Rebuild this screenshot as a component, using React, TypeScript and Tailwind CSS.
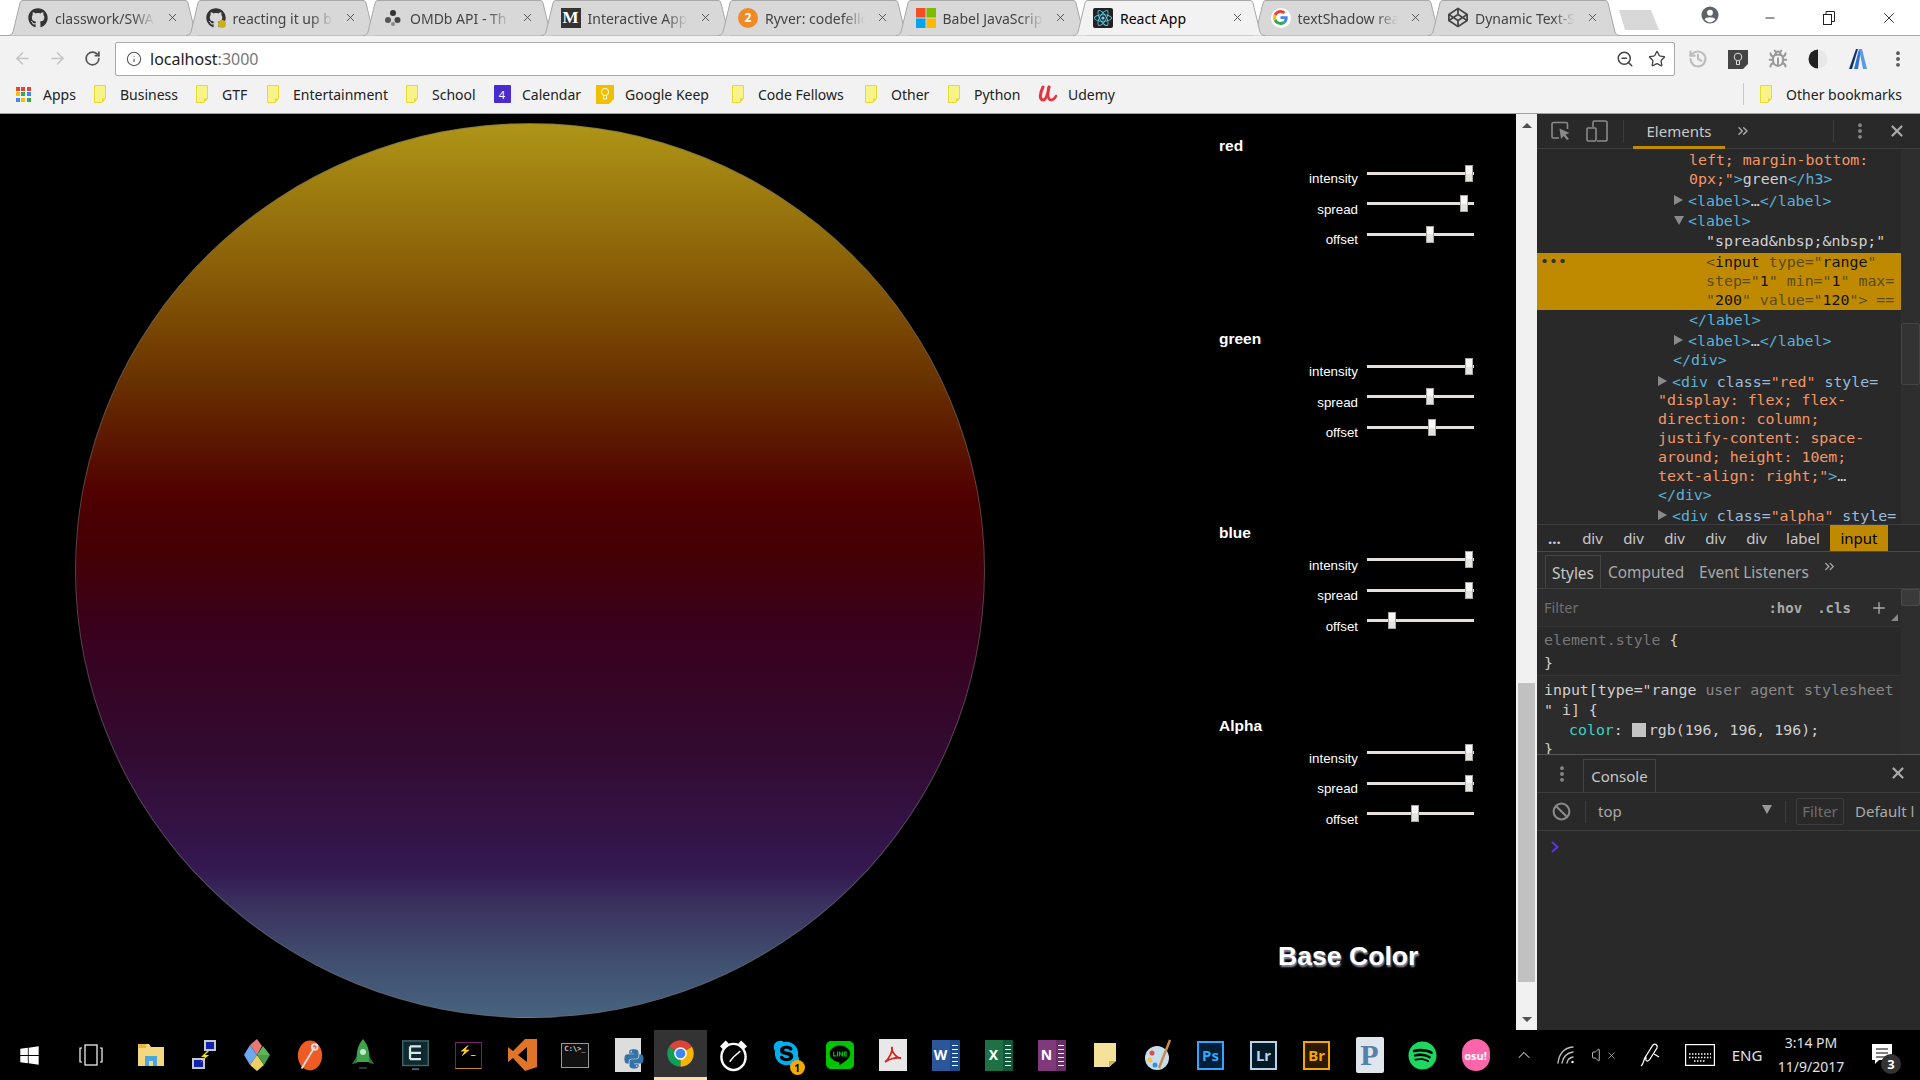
import React from 'react';
import {
  ArrowLeft,
  ArrowRight,
  RotateCw,
  Info,
  ZoomOut,
  Star,
  History,
  Bug,
  X,
  Minus,
  EllipsisVertical,
  ChevronsRight,
  ChevronUp,
  Plus,
  Ban,
  Volume,
} from 'lucide-react';
import { FaGithub, FaReact, FaCodepen, FaWindows, FaSkype, FaLine, FaSpotify, FaPython } from 'react-icons/fa';

const GoogleG = () => (
  <span className="flex h-[20px] w-[20px] items-center justify-center rounded-full bg-white">
    <svg viewBox="0 0 48 48" className="h-[15px] w-[15px]">
      <path fill="#EA4335" d="M24 9.5c3.54 0 6.71 1.22 9.21 3.6l6.85-6.85C35.9 2.38 30.47 0 24 0 14.62 0 6.51 5.38 2.56 13.22l7.98 6.19C12.43 13.72 17.74 9.5 24 9.5z" />
      <path fill="#4285F4" d="M46.98 24.55c0-1.57-.15-3.09-.38-4.55H24v9.02h12.94c-.58 2.96-2.26 5.48-4.78 7.18l7.73 6c4.51-4.18 7.09-10.36 7.09-17.65z" />
      <path fill="#FBBC05" d="M10.53 28.59c-.48-1.45-.76-2.99-.76-4.59s.27-3.14.76-4.59l-7.98-6.19C.92 16.46 0 20.12 0 24c0 3.88.92 7.54 2.56 10.78l7.97-6.19z" />
      <path fill="#34A853" d="M24 48c6.48 0 11.93-2.13 15.89-5.81l-7.73-6c-2.15 1.45-4.92 2.3-8.16 2.3-6.26 0-11.57-4.22-13.47-9.91l-7.98 6.19C6.51 42.62 14.62 48 24 48z" />
    </svg>
  </span>
);

const FilmIcon = () => (
  <svg viewBox="0 0 20 20" className="h-[20px] w-[20px]">
    <circle cx="10" cy="10" r="9.5" fill="#d8d8d8" />
    <circle cx="10" cy="5" r="3" fill="#333" />
    <circle cx="5" cy="12" r="3" fill="#555" />
    <circle cx="14.5" cy="12" r="3" fill="#444" />
    <circle cx="10" cy="16" r="2" fill="#888" />
  </svg>
);

const MsIcon = () => (
  <svg viewBox="0 0 20 20" className="h-[20px] w-[20px]">
    <rect x="0" y="0" width="9.5" height="9.5" fill="#f25022" />
    <rect x="10.5" y="0" width="9.5" height="9.5" fill="#7fba00" />
    <rect x="0" y="10.5" width="9.5" height="9.5" fill="#00a4ef" />
    <rect x="10.5" y="10.5" width="9.5" height="9.5" fill="#ffb900" />
  </svg>
);

const tabs: { title: string; icon: React.ReactNode; active?: boolean }[] = [
  { title: 'classwork/SWA', icon: <FaGithub className="h-[20px] w-[20px] text-[#333]" /> },
  {
    title: 'reacting it up b',
    icon: (
      <span className="relative">
        <FaGithub className="h-[20px] w-[20px] text-[#333]" />
        <span className="absolute bottom-0 right-0 h-[8px] w-[8px] rounded-full bg-[#c9b11a]" />
      </span>
    ),
  },
  { title: 'OMDb API - Th', icon: <FilmIcon /> },
  {
    title: 'Interactive App',
    icon: <span className="flex h-[20px] w-[20px] items-center justify-center bg-[#333] font-['Liberation_Serif',serif] text-[17px] font-bold text-white">M</span>,
  },
  {
    title: 'Ryver: codefello',
    icon: <span className="flex h-[20px] w-[20px] items-center justify-center rounded-full bg-[#f08a24] text-[12px] font-bold text-white">2</span>,
  },
  { title: 'Babel JavaScrip', icon: <MsIcon /> },
  {
    title: 'React App',
    active: true,
    icon: (
      <span className="flex h-[20px] w-[20px] items-center justify-center rounded-[2px] bg-[#222]">
        <FaReact className="h-[18px] w-[18px] text-[#61dafb]" />
      </span>
    ),
  },
  { title: 'textShadow rea', icon: <GoogleG /> },
  { title: 'Dynamic Text-S', icon: <FaCodepen className="h-[21px] w-[21px] text-[#444]" /> },
];

const Tab = ({ title, icon, active }: { title: string; icon: React.ReactNode; active?: boolean }) => (
  <div className={`relative -mr-[14.5px] h-[36px] w-[192px] shrink-0 ${active ? 'z-10' : ''}`}>
    <svg viewBox="0 0 192 36" className="absolute inset-0 h-[36px] w-[192px]">
      <path
        d="M0 35.5 C3 35.5 4 34 5 32 L12 3 C12.6 1 13.5 .5 15 .5 L177 .5 C178.5 .5 179.4 1 180 3 L187 32 C188 34 189 35.5 192 35.5"
        fill={active ? '#f2f2f2' : '#d8d8d8'}
        stroke="#a8a8a8"
      />
    </svg>
    <div className="relative flex h-[35px] items-center pl-[20px]">
      <span className="flex w-[20px] shrink-0 items-center justify-center">{icon}</span>
      <span
        className={`ml-[7px] w-[100px] overflow-hidden whitespace-nowrap pt-[1px] text-[14px] ${
          active ? 'text-black' : 'text-[#444] [mask-image:linear-gradient(to_right,black_78%,transparent)]'
        }`}
      >
        {title}
      </span>
      <X className="ml-[11px] h-[13px] w-[13px] text-[#555]" strokeWidth={1.8} />
    </div>
  </div>
);

const Folder = () => (
  <svg viewBox="0 0 14 18" className="h-[18px] w-[14px]">
    <path d="M1.5 .5 H12.5 V13.5 L9 17.5 H1.5 Z" fill="#f8f388" stroke="#e6dc2c" />
    <path d="M12.5 13.5 H9 V17.5" fill="#e6dc2c" />
  </svg>
);

const AppsIcon = () => {
  const colors = ['#e94335', '#e94335', '#e94335', '#fbbc05', '#34a853', '#4285f4', '#4285f4', '#fbbc05', '#34a853'];
  return (
    <span className="grid grid-cols-3 gap-[1.5px]">
      {colors.map((c, i) => (
        <span key={i} className="h-[4px] w-[4px]" style={{ backgroundColor: c }} />
      ))}
    </span>
  );
};

const UdemyIcon = () => (
  <svg viewBox="0 0 20 18" className="h-[18px] w-[20px]" fill="none" stroke="#e8323c" strokeWidth="3" strokeLinecap="round">
    <path d="M5 2 C2 8 1 15 5 15 C8 15 10 8 11 2" />
    <path d="M11 2 C9 9 10 15 13 15 C15 15 17 13 18 11" strokeWidth="2.6" />
  </svg>
);

const bookmarks: { label: string; icon: React.ReactNode; width: string }[] = [
  { label: 'Apps', icon: <AppsIcon />, width: 'w-[77px]' },
  { label: 'Business', icon: <Folder />, width: 'w-[102px]' },
  { label: 'GTF', icon: <Folder />, width: 'w-[71px]' },
  { label: 'Entertainment', icon: <Folder />, width: 'w-[139px]' },
  { label: 'School', icon: <Folder />, width: 'w-[90px]' },
  {
    label: 'Calendar',
    icon: <span className="flex h-[18px] w-[17px] items-center justify-center rounded-[1px] bg-[#4a2bd0] text-[11px] leading-none text-white">4</span>,
    width: 'w-[103px]',
  },
  {
    label: 'Google Keep',
    icon: (
      <svg viewBox="0 0 18 20" className="h-[20px] w-[18px]">
        <path d="M0 1 H18 V15 L13 20 H0 Z" fill="#f0c000" />
        <circle cx="9" cy="8" r="3.6" fill="none" stroke="#fff" />
        <path d="M7.5 12 V15 H10.5 V12" fill="none" stroke="#fff" />
      </svg>
    ),
    width: 'w-[133px]',
  },
  { label: 'Code Fellows', icon: <Folder />, width: 'w-[133px]' },
  { label: 'Other', icon: <Folder />, width: 'w-[83px]' },
  { label: 'Python', icon: <Folder />, width: 'w-[94px]' },
  { label: 'Udemy', icon: <UdemyIcon />, width: 'w-[100px]' },
];

const Bookmark = ({ label, icon, width }: { label: string; icon: React.ReactNode; width?: string }) => (
  <div className={`flex shrink-0 items-center ${width ?? ''}`}>
    <span className="flex w-[24px] shrink-0 justify-center">{icon}</span>
    <span className="ml-[8px] whitespace-nowrap text-[14px] text-[#222]">{label}</span>
  </div>
);

const extButton = 'flex w-[40px] items-center justify-center';

const BrowserChrome = () => (
  <div className="shrink-0 bg-[#f2f2f2]">
    {/* tab strip */}
    <div className="flex h-[36px] border-b border-[#a9a9a9] bg-white">
      <div className="flex pl-[8px]">
        {tabs.map((t) => (
          <Tab key={t.title} {...t} />
        ))}
      </div>
      <svg viewBox="0 0 42 22" className="ml-[12.5px] mt-[9px] h-[22px] w-[42px] shrink-0">
        <path d="M1 1 H33 L41 21 H7 Z" fill="#d8d8d8" />
      </svg>
      <div className="ml-auto flex h-[35px] text-[#222]">
        <span className="flex w-[60px] items-center justify-center pb-[5px]">
          <svg viewBox="0 0 20 20" className="h-[18px] w-[18px]">
            <circle cx="10" cy="10" r="9.5" fill="#5f6368" />
            <circle cx="10" cy="7.5" r="3.2" fill="#fff" />
            <path d="M4 15 C5 11.8 15 11.8 16 15 L12 18 H8 Z" fill="#fff" />
          </svg>
        </span>
        <span className="flex w-[60px] items-center justify-center">
          <Minus className="h-[14px] w-[14px]" strokeWidth={1.6} />
        </span>
        <span className="flex w-[58px] items-center justify-center">
          <svg viewBox="0 0 12 14" className="h-[14px] w-[12px]" fill="none" stroke="#222">
            <rect x=".5" y="3.5" width="8" height="10" />
            <path d="M3 3.5 V.5 H11.5 V10.5 H8.5" />
          </svg>
        </span>
        <span className="flex w-[62px] items-center justify-center">
          <X className="h-[18px] w-[18px]" strokeWidth={1.2} />
        </span>
      </div>
    </div>

    {/* toolbar */}
    <div className="flex h-[40px] items-start pt-[6px]">
      <div className="flex h-[33px] w-[115px] shrink-0 items-center pl-[5px]">
        <span className="flex w-[35px] justify-center"><ArrowLeft className="h-[19px] w-[19px] text-[#c4c4c4]" strokeWidth={2} /></span>
        <span className="flex w-[35px] justify-center"><ArrowRight className="h-[19px] w-[19px] text-[#c4c4c4]" strokeWidth={2} /></span>
        <span className="flex w-[35px] justify-center"><RotateCw className="h-[17px] w-[17px] text-[#555]" strokeWidth={2.4} /></span>
      </div>
      <div className="flex h-[34px] w-[1560px] shrink-0 items-center rounded-[2px] border border-[#a9a9a9] bg-white pl-[10px] pr-[8px]">
        <Info className="h-[16px] w-[16px] text-[#555]" strokeWidth={1.6} />
        <span className="ml-[8px] text-[16px] text-[#222]">
          localhost<span className="text-[#777]">:3000</span>
        </span>
        <ZoomOut className="ml-auto h-[18px] w-[18px] text-[#444]" strokeWidth={2} />
        <Star className="ml-[14px] h-[18px] w-[18px] text-[#444]" strokeWidth={1.8} />
      </div>
      <div className="flex h-[33px] items-center pl-[3px]">
        <span className={extButton}><History className="h-[20px] w-[20px] text-[#bdbdbd]" strokeWidth={2.6} /></span>
        <span className={extButton}>
          <svg viewBox="0 0 20 20" className="h-[20px] w-[20px]">
            <path d="M0 1 H20 V15 L15 20 H0 Z" fill="#444" />
            <circle cx="10" cy="8" r="3.8" fill="none" stroke="#ddd" />
            <path d="M8.5 12 V15.5 H11.5 V12" fill="none" stroke="#ddd" />
          </svg>
        </span>
        <span className={extButton}><Bug className="h-[20px] w-[20px] text-[#999]" strokeWidth={2.4} /></span>
        <span className={extButton}>
          <svg viewBox="0 0 20 20" className="h-[20px] w-[20px]">
            <circle cx="10" cy="10" r="9.5" fill="#e8e8e8" />
            <path d="M10 .5 A9.5 9.5 0 0 0 10 19.5 Z" fill="#222" />
          </svg>
        </span>
        <span className={extButton}>
          <svg viewBox="0 0 20 22" className="h-[22px] w-[20px]">
            <path d="M1 21 L8 1 H10 L4 21 Z" fill="#12306e" />
            <path d="M6 21 L11 1 H13 L10 21 Z" fill="#2f6fd0" />
            <path d="M11 1 H14 L19 21 H15 Z" fill="#5a9ae8" />
          </svg>
        </span>
        <span className={extButton}><EllipsisVertical className="h-[20px] w-[20px] text-[#555]" strokeWidth={2.6} /></span>
      </div>
    </div>

    {/* bookmarks */}
    <div className="flex h-[38px] items-center border-b border-[#a0a0a0] pb-[1px] pl-[11px]">
      {bookmarks.map((b) => (
        <Bookmark key={b.label} {...b} />
      ))}
      <div className="ml-auto flex items-center pr-[18px]">
        <span className="mr-[10px] h-[22px] w-px bg-[#c8c8c8]" />
        <Bookmark label="Other bookmarks" icon={<Folder />} />
      </div>
    </div>
  </div>
);

const sliders = [
  { name: 'red', values: [99, 94, 60] },
  { name: 'green', values: [99, 60, 62] },
  { name: 'blue', values: [99, 99, 21] },
  { name: 'Alpha', values: [99, 99, 44] },
];

const SliderRow = ({ label, value }: { label: string; value: number }) => (
  <label className="flex h-[30.5px] items-start">
    <span className="mt-[6.5px] w-[139px] text-right text-[13.33px] leading-[16px] text-white">{label}</span>
    <input
      type="range"
      min={0}
      max={100}
      defaultValue={value}
      className="ml-[9px] h-[17px] w-[107px] cursor-default appearance-none bg-transparent [&::-webkit-slider-runnable-track]:h-[3px] [&::-webkit-slider-runnable-track]:bg-[#e5e1da] [&::-webkit-slider-thumb]:-mt-[7px] [&::-webkit-slider-thumb]:h-[17px] [&::-webkit-slider-thumb]:w-[8px] [&::-webkit-slider-thumb]:appearance-none [&::-webkit-slider-thumb]:border [&::-webkit-slider-thumb]:border-[#a9a79f] [&::-webkit-slider-thumb]:bg-[linear-gradient(#f8f8f6_50%,#e6e4df_50%)]"
    />
  </label>
);

const Controls = () => (
  <div className="flex w-[297px] shrink-0 flex-col pt-[22px] font-['Liberation_Sans',sans-serif]">
    {sliders.map((s) => (
      <div key={s.name} className="h-[193.3px]">
        <h3 className="mb-[8.5px] h-[20px] text-[15.5px] font-bold leading-[20px] text-white">{s.name}</h3>
        <SliderRow label="intensity" value={s.values[0]} />
        <SliderRow label="spread" value={s.values[1]} />
        <SliderRow label="offset" value={s.values[2]} />
      </div>
    ))}
    <div className="ml-[59px] mt-[31px] text-[26.6px] font-bold leading-[32px] text-white [text-shadow:1px_2px_2px_#9a9ab0]">Base Color</div>
  </div>
);

const PageScrollbar = () => (
  <div className="flex w-[21px] shrink-0 flex-col bg-[#f1f1f1]">
    <div className="flex h-[22px] items-center justify-center">
      <span className="h-0 w-0 border-x-[5px] border-b-[5px] border-x-transparent border-b-[#505050]" />
    </div>
    <div className="ml-[2px] mt-[547px] h-[299px] w-[17px] bg-[#c1c1c1]" />
    <div className="mt-auto flex h-[22px] items-center justify-center">
      <span className="h-0 w-0 border-x-[5px] border-t-[5px] border-x-transparent border-t-[#505050]" />
    </div>
  </div>
);

const TAG = 'text-[#5db0d7]';
const ATTR = 'text-[#9bbbdc]';
const VAL = 'text-[#f29766]';
const TXT = 'text-[#d0d0d0]';

const Tri = ({ open }: { open?: boolean }) => (
  <span className="inline-block w-[14px] -ml-[14px] align-[1px]">
    {open ? (
      <span className="inline-block h-0 w-0 border-x-[5px] border-t-[9px] border-x-transparent border-t-[#8a8a8a]" />
    ) : (
      <span className="inline-block h-0 w-0 border-y-[5px] border-l-[9px] border-y-transparent border-l-[#8a8a8a]" />
    )}
  </span>
);

const ElementsTree = () => (
  <div className="flex h-[376px] border-b border-[#3d3d3d]">
    <div className="w-[364px] shrink-0 overflow-hidden pt-[2px] font-['DejaVu_Sans_Mono',monospace] text-[14.9px] [&>div]:whitespace-pre">
      <div className="h-[19px] pl-[152px] leading-[19px]"><span className={VAL}>left; margin-bottom:</span></div>
      <div className="h-[20px] pl-[152px] leading-[19px]"><span className={VAL}>0px;"</span><span className={TAG}>&gt;</span><span className={TXT}>green</span><span className={TAG}>&lt;/h3&gt;</span></div>
      <div className="h-[20px] pl-[151px] leading-[20px]"><Tri /><span className={TAG}>&lt;label&gt;</span><span className={TXT}>…</span><span className={TAG}>&lt;/label&gt;</span></div>
      <div className="h-[20.5px] pl-[151px] leading-[20px]"><Tri open /><span className={TAG}>&lt;label&gt;</span></div>
      <div className="h-[22.5px] pl-[169px] leading-[20px]"><span className={TXT}>"spread&amp;nbsp;&amp;nbsp;"</span></div>
      <div className="relative h-[57px] bg-[#c08a00] pl-[169px] leading-[19px] text-[#111]">
        <span className="absolute left-[3px] top-[-1px] text-[#333]">•••</span>
        <span className="text-[#5a4a1c]">&lt;</span>input <span className="text-[#5a4a1c]">type="</span>range<span className="text-[#5a4a1c]">"</span>{'\n'}
        <span className="text-[#5a4a1c]">step="</span>1<span className="text-[#5a4a1c]">" min="</span>1<span className="text-[#5a4a1c]">" max=</span>{'\n'}
        <span className="text-[#5a4a1c]">"</span>200<span className="text-[#5a4a1c]">" value="</span>120<span className="text-[#5a4a1c]">"&gt; ==</span>
      </div>
      <div className="h-[20px] pl-[152px] leading-[20px]"><span className={TAG}>&lt;/label&gt;</span></div>
      <div className="h-[20px] pl-[151px] leading-[20px]"><Tri /><span className={TAG}>&lt;label&gt;</span><span className={TXT}>…</span><span className={TAG}>&lt;/label&gt;</span></div>
      <div className="h-[22px] pl-[136px] leading-[20px]"><span className={TAG}>&lt;/div&gt;</span></div>
      <div className="h-[19px] pl-[135px] leading-[19px]"><Tri /><span className={TAG}>&lt;div </span><span className={ATTR}>class=</span><span className={VAL}>"red"</span><span className={ATTR}> style=</span></div>
      <div className="h-[19px] pl-[121px] leading-[19px]"><span className={VAL}>"display: flex; flex-</span></div>
      <div className="h-[19px] pl-[121px] leading-[19px]"><span className={VAL}>direction: column;</span></div>
      <div className="h-[19px] pl-[121px] leading-[19px]"><span className={VAL}>justify-content: space-</span></div>
      <div className="h-[19px] pl-[121px] leading-[19px]"><span className={VAL}>around; height: 10em;</span></div>
      <div className="h-[19px] pl-[121px] leading-[19px]"><span className={VAL}>text-align: right;"</span><span className={TAG}>&gt;</span><span className={TXT}>…</span></div>
      <div className="h-[20px] pl-[121px] leading-[19px]"><span className={TAG}>&lt;/div&gt;</span></div>
      <div className="h-[19px] pl-[135px] leading-[19px]"><Tri /><span className={TAG}>&lt;div </span><span className={ATTR}>class=</span><span className={VAL}>"alpha"</span><span className={ATTR}> style=</span></div>
    </div>
    <div className="flex-1 bg-[#2e2e2e]">
      <div className="mt-[174px] h-[62px] rounded-[2px] border border-[#444] bg-[#333]" />
    </div>
  </div>
);

const crumbs = ['div', 'div', 'div', 'div', 'div'];

const Breadcrumbs = () => (
  <div className="flex h-[27px] items-center border-b border-[#4a4a4a] text-[15px] text-[#c8c8c8]">
    <span className="w-[35px] pl-[11px] font-bold leading-[20px]">...</span>
    {crumbs.map((c, i) => (
      <span key={i} className="flex w-[41px] justify-center">{c}</span>
    ))}
    <span className="flex w-[52px] justify-center">label</span>
    <span className="ml-[1px] flex h-[26px] w-[58px] items-center justify-center bg-[#c08a00] text-black">input</span>
  </div>
);

const StylesPane = () => (
  <div className="flex h-[203px] flex-col border-b border-[#555] bg-[#2c2c2c]">
    <div className="flex h-[37px] shrink-0 items-end border-b border-[#3d3d3d] pl-[8px] text-[15.4px] text-[#a9a9a9]">
      <span className="flex h-[33px] w-[56px] items-center justify-center border-x border-t border-[#444] pt-[3px] text-[#c8c8c8]">Styles</span>
      <span className="ml-[7px] flex h-[33px] items-center pt-[3px]">Computed</span>
      <span className="ml-[15px] flex h-[33px] items-center pt-[3px]">Event Listeners</span>
      <ChevronsRight className="mb-[14px] ml-[13px] h-[15px] w-[15px] text-[#aaa]" strokeWidth={2.2} />
    </div>
    <div className="flex min-h-0 flex-1">
      <div className="w-[364px] shrink-0 overflow-hidden">
        <div className="flex h-[38px] items-center border-b border-[#333] pl-[7px] pt-[1px] text-[14.5px] text-[#6f6f6f]">
          Filter
          <span className="ml-[190px] font-['DejaVu_Sans_Mono',monospace] text-[14px] font-bold text-[#aaa]">:hov</span>
          <span className="ml-[15px] font-['DejaVu_Sans_Mono',monospace] text-[14px] font-bold text-[#aaa]">.cls</span>
          <Plus className="ml-[19px] h-[18px] w-[18px] text-[#aaa]" strokeWidth={1.8} />
          <span className="ml-[3px] mt-[18px] h-0 w-0 border-b-[7px] border-l-[7px] border-b-[#888] border-l-transparent" />
        </div>
        <div className="h-[49px] whitespace-pre border-b border-[#333] bg-[#292929] pl-[7px] pt-[2px] font-['DejaVu_Sans_Mono',monospace] text-[14.9px] leading-[23px] text-[#d0d0d0]">
          <span className="text-[#777]">element.style</span> {'{'}{'\n'}{'}'}
        </div>
        <div className="whitespace-pre pl-[7px] pt-[5px] font-['DejaVu_Sans_Mono',monospace] text-[14.9px] leading-[19.5px] text-[#d0d0d0]">
          input[type="range <span className="text-[#888]">user agent stylesheet</span>{'\n'}
          " i] {'{'}{'\n'}
          <span className="inline-block w-[25px]" /><span className="relative top-[1px] text-[#35d4c7]">color</span><span className="relative top-[1px]">: </span><span className="relative top-[1px] inline-block h-[14px] w-[14px] bg-[#c4c4c4] align-[-2px]" /><span className="relative top-[1px] ml-[3px]">rgb(196, 196, 196);</span>{'\n'}
          {'}'}
        </div>
      </div>
      <div className="flex-1 bg-[#2e2e2e]">
        <div className="h-[17px] rounded-[2px] border border-[#4a4a4a] bg-[#3a3a3a]" />
      </div>
    </div>
  </div>
);

const ConsoleDrawer = () => (
  <div className="flex min-h-0 flex-1 flex-col bg-[#292929]">
    <div className="flex h-[38px] shrink-0 items-end border-b border-[#3d3d3d]">
      <span className="flex h-[37px] w-[46px] items-center justify-center pl-[3px]">
        <EllipsisVertical className="h-[20px] w-[20px] text-[#8a8a8a]" strokeWidth={2.6} />
      </span>
      <span className="flex h-[33px] w-[73px] items-center justify-center border-x border-t border-[#444] text-[15px] text-[#c8c8c8]">Console</span>
      <span className="ml-auto flex h-[37px] w-[44px] items-center justify-center pb-[2px]">
        <X className="h-[18px] w-[18px] text-[#aaa]" strokeWidth={3} />
      </span>
    </div>
    <div className="flex h-[38px] shrink-0 items-center border-b border-[#3d3d3d] text-[15px] text-[#aaa]">
      <span className="flex w-[48px] justify-center"><Ban className="h-[19px] w-[19px] text-[#8a8a8a]" strokeWidth={2.6} /></span>
      <span className="h-[22px] w-px bg-[#3d3d3d]" />
      <span className="ml-[12px] w-[164px]">top</span>
      <span className="mb-[4px] h-0 w-0 border-x-[5.5px] border-t-[9px] border-x-transparent border-t-[#999]" />
      <span className="ml-[13px] h-[22px] w-px bg-[#3d3d3d]" />
      <span className="ml-[10px] flex h-[27px] w-[48px] items-center justify-center rounded-[2px] border border-[#3d3d3d] text-[#6f6f6f]">Filter</span>
      <span className="ml-[11px] whitespace-nowrap">Default l</span>
    </div>
    <div className="pl-[14px] pt-[10px]">
      <svg viewBox="0 0 8 12" className="h-[12px] w-[8px]" fill="none" stroke="#5a35e0" strokeWidth="2">
        <path d="M1 1 L6.5 6 L1 11" />
      </svg>
    </div>
  </div>
);

const DevTools = () => (
  <div className="flex min-w-0 flex-1 flex-col bg-[#292929]">
    <div className="flex h-[35px] shrink-0 items-center border-b border-[#3d3d3d] text-[#8a8a8a]">
      <span className="flex w-[42px] justify-center pl-[6px]">
        <svg viewBox="0 0 20 20" className="h-[20px] w-[20px]" fill="none" stroke="#8a8a8a" strokeWidth="1.6">
          <path d="M8 17 H2.5 Q1 17 1 15.5 V3 Q1 1.5 2.5 1.5 H15 Q16.5 1.5 16.5 3 V8" />
          <path d="M8.5 7.5 L18.5 12 L14.5 13.5 L18 18 L16 19 L12.5 15 L10 18 Z" fill="#8a8a8a" stroke="none" />
        </svg>
      </span>
      <span className="flex w-[33px] justify-center pl-[3px]">
        <svg viewBox="0 0 22 22" className="h-[22px] w-[22px]" fill="none" stroke="#8a8a8a" strokeWidth="1.6">
          <path d="M7 7 V2.5 Q7 1 8.5 1 H19 Q21 1 21 2.5 V19.5 Q21 21 19 21 H11" />
          <rect x="1" y="8" width="9" height="13" rx="1" />
        </svg>
      </span>
      <span className="ml-[11px] h-[22px] w-px bg-[#3d3d3d]" />
      <span className="relative ml-[9px] flex h-[35px] w-[92px] items-center justify-center border-b-[3px] border-[#c08a00] pt-[3px] text-[15px] text-[#c8c8c8]">Elements</span>
      <ChevronsRight className="ml-[10px] h-[16px] w-[16px] text-[#aaa]" strokeWidth={2.2} />
      <span className="ml-[82px] h-[22px] w-px bg-[#3d3d3d]" />
      <span className="ml-[16px] flex w-[20px] justify-center"><EllipsisVertical className="h-[20px] w-[20px]" strokeWidth={2.6} /></span>
      <span className="ml-[17px] flex w-[20px] justify-center"><X className="h-[18px] w-[18px] text-[#aaa]" strokeWidth={3} /></span>
    </div>
    <ElementsTree />
    <Breadcrumbs />
    <StylesPane />
    <ConsoleDrawer />
  </div>
);

const TileText = ({ text, className }: { text: string; className: string }) => (
  <span className={`flex h-[29px] w-[27px] items-center justify-center border-2 text-[15px] font-bold leading-none ${className}`}>{text}</span>
);

const OfficeTile = ({ letter, tile, page }: { letter: string; tile: string; page: string }) => (
  <span className={`flex h-[31px] w-[28px] items-center rounded-[1px] ${page} pr-[2px]`}>
    <span className={`flex h-[31px] w-[18px] items-center justify-center text-[14px] font-bold leading-none text-white ${tile}`}>{letter}</span>
    <span className="ml-[2px] h-[21px] flex-1 bg-[repeating-linear-gradient(#ffffff_0_1.5px,transparent_1.5px_4px)]" />
  </span>
);

const taskIcons: React.ReactNode[] = [
  // file explorer
  <svg viewBox="0 0 28 28" className="h-[28px] w-[28px]" key="ex">
    <path d="M1 3 H12 L14 6 H27 V25 H1 Z" fill="#f5d77f" />
    <path d="M1 3 H9 V7 H1 Z" fill="#e8b93e" />
    <path d="M8 15 H20 V25 H16 V20 H12 V25 H8 Z" fill="#45a8e0" />
  </svg>,
  // putty
  <svg viewBox="0 0 28 32" className="h-[32px] w-[28px]" key="pu">
    <rect x="14" y="1" width="12" height="11" fill="#c8c8c8" />
    <rect x="16" y="3" width="8" height="7" fill="#1020b0" />
    <rect x="2" y="19" width="13" height="11" fill="#c8c8c8" />
    <rect x="4" y="21" width="9" height="7" fill="#1020b0" />
    <path d="M17 12 L11 18 H15 L10 24 L19 16 H15 L19 12 Z" fill="#f5e020" />
  </svg>,
  // diamond app
  <svg viewBox="0 0 30 34" className="h-[34px] w-[30px]" key="gk">
    <path d="M15 17 L8 7 L15 1 L20 8 Z" fill="#e87878" />
    <path d="M15 17 L2 17 L8 7 Z" fill="#6ea8ee" />
    <path d="M15 17 L8 27 L2 17 Z" fill="#6ea8ee" />
    <path d="M15 17 L28 17 L21 8 Z" fill="#5cb85c" />
    <path d="M15 17 L22 27 L15 33 L8 27 Z" fill="#f0d060" />
    <path d="M15 17 L28 17 L22 27 Z" fill="#4aa04a" />
  </svg>,
  // postman style
  <svg viewBox="0 0 30 34" className="h-[33px] w-[28px]" key="po">
    <ellipse cx="15" cy="17" rx="13" ry="16" fill="#ef5b25" />
    <path d="M6 31 L20 8" stroke="#ddd" strokeWidth="2" />
    <circle cx="20" cy="8" r="3" fill="none" stroke="#ddd" strokeWidth="2" />
  </svg>,
  // rocket
  <svg viewBox="0 0 24 34" className="h-[34px] w-[24px]" key="ro">
    <path d="M12 1 C18 8 19 16 18 24 H6 C5 16 6 8 12 1 Z" fill="#3fa34d" />
    <circle cx="12" cy="14" r="3" fill="#c4e8c8" />
    <path d="M6 18 L1 26 L6 25 Z M18 18 L23 26 L18 25 Z" fill="#2c7a38" />
    <rect x="8" y="29" width="8" height="2" fill="#333" />
  </svg>,
  // editor monitor
  <svg viewBox="0 0 30 34" className="h-[31px] w-[29px]" key="ed">
    <rect x="1" y="1" width="28" height="27" fill="#0e2a2e" stroke="#3d6a70" strokeWidth="1.5" />
    <path d="M9 7 H21 M9 14 H21 M9 21 H21 M9 7 V21" stroke="#d8e8e8" strokeWidth="2.5" fill="none" />
    <rect x="11" y="31" width="8" height="2" fill="#3d6a70" />
  </svg>,
  // hyper terminal
  <span key="hy" className="flex h-[27px] w-[27px] items-start border border-[#7a1d6e] border-b-[#c98a1d] pl-[3px] text-[10px] leading-[14px] text-white">⚡_</span>,
  // vs
  <svg viewBox="0 0 30 34" className="h-[34px] w-[30px]" key="vs">
    <path d="M30 1 L18 1 L6 13 L1 9 V24 L6 20 L18 33 L30 29 Z M20 9 V24 L11 17 Z" fill="#e0752a" />
  </svg>,
  // cmd
  <span key="cm" className="flex h-[25px] w-[28px] items-start border border-[#999] bg-[#111] pl-[3px] pt-[2px] font-['DejaVu_Sans_Mono',monospace] text-[7px] leading-none text-white">C:\&gt;_</span>,
  // python file
  <span key="py" className="relative flex h-[34px] w-[26px] justify-center bg-[#ddd]">
    <FaPython className="absolute -right-[4px] bottom-[2px] h-[22px] w-[22px] text-[#3572a5]" />
  </span>,
  // chrome
  <svg viewBox="0 0 48 48" className="h-[29px] w-[29px]" key="ch">
    <path d="M24 24 L5 13 A22 22 0 0 1 43 13 Z" fill="#db4437" />
    <path d="M24 24 L5 13 A22 22 0 0 0 24 46 Z" fill="#0f9d58" />
    <path d="M24 24 L43 13 A22 22 0 0 1 24 46 Z" fill="#f4b400" />
    <circle cx="24" cy="24" r="10.5" fill="#fff" />
    <circle cx="24" cy="24" r="8" fill="#4285f4" />
  </svg>,
  // alarm clock
  <svg viewBox="0 0 30 34" className="h-[34px] w-[29px]" key="al">
    <ellipse cx="15" cy="19" rx="12.5" ry="13.5" fill="#000" stroke="#fff" strokeWidth="2.5" />
    <path d="M1 8 L7 2 L10 5 L4 11 Z M29 8 L23 2 L20 5 L26 11 Z" fill="#fff" />
    <path d="M15 19 L11 24 M15 19 L22 13" stroke="#fff" strokeWidth="1.5" />
  </svg>,
  // skype
  <span key="sk" className="relative flex h-[32px] w-[28px]">
    <FaSkype className="h-[29px] w-[27px] text-[#00aff0]" />
    <span className="absolute -bottom-[4px] -right-[4px] flex h-[15px] w-[15px] items-center justify-center rounded-full bg-[#f5a800] text-[10px] font-bold leading-none text-black">1</span>
  </span>,
  <FaLine key="li" className="h-[32px] w-[30px] text-[#00c300]" />,
  // acrobat
  <span key="ac" className="flex h-[32px] w-[28px] items-center justify-center bg-[#e8e8e8]">
    <svg viewBox="0 0 20 20" className="h-[20px] w-[20px]" fill="none" stroke="#d4281c" strokeWidth="1.8">
      <path d="M2 17 C6 14 10 6 9 2 C8 6 13 13 18 13 C13 12 6 14 2 17 Z" />
    </svg>
  </span>,
  <OfficeTile key="wo" letter="W" tile="bg-[#2b579a]" page="bg-[#1d4a8a]" />,
  <OfficeTile key="xl" letter="X" tile="bg-[#1e7145]" page="bg-[#14583a]" />,
  <OfficeTile key="on" letter="N" tile="bg-[#80397b]" page="bg-[#6a2c66]" />,
  // sticky notes
  <svg viewBox="0 0 24 26" className="h-[26px] w-[24px]" key="st">
    <path d="M1 1 H23 V19 L16 25 H1 Z" fill="#f5e199" />
    <path d="M23 19 H16 V25 Z" fill="#c9b25d" />
  </svg>,
  // paint
  <svg viewBox="0 0 30 34" className="h-[34px] w-[30px]" key="pa">
    <ellipse cx="14" cy="20" rx="12" ry="12" fill="#c6dff0" />
    <circle cx="9" cy="15" r="2.5" fill="#e84a4a" />
    <circle cx="7" cy="22" r="2.5" fill="#f5c542" />
    <circle cx="12" cy="27" r="2.5" fill="#3b8ed8" />
    <path d="M16 30 L27 2" stroke="#c98b4a" strokeWidth="2.5" />
  </svg>,
  <TileText key="ps" text="Ps" className="border-[#31a8ff] bg-[#001e36] text-[#31a8ff]" />,
  <TileText key="lr" text="Lr" className="border-[#b7d4e8] bg-[#001a26] text-[#b7d4e8]" />,
  <TileText key="br" text="Br" className="border-[#f5a800] bg-[#2b1a00] text-[#f5a800]" />,
  <span key="pb" className="flex h-[36px] w-[28px] items-center justify-center rounded-[2px] bg-[#dfe6ee] font-['Liberation_Serif',serif] text-[30px] font-bold leading-none text-[#5580a8]">P</span>,
  <FaSpotify key="sp" className="h-[29px] w-[29px] text-[#1ed760]" />,
  <span key="os" className="flex h-[32px] w-[28px] items-center justify-center rounded-full bg-[#ff66aa] text-[11px] font-bold leading-none text-white">osu!</span>,
];

const Taskbar = () => (
  <div className="flex h-[50px] shrink-0 bg-black text-[14px] text-[#e0e0e0]">
    <span className="flex w-[58px] items-center justify-center"><FaWindows className="h-[21px] w-[21px] text-white" /></span>
    <span className="flex w-[66px] items-center justify-center">
      <svg viewBox="0 0 24 22" className="h-[22px] w-[24px]" fill="none" stroke="#fff" strokeWidth="1.2">
        <rect x="6" y="1" width="12" height="20" />
        <path d="M3 4 H1 V18 H3 M21 4 H23 V18 H21" />
      </svg>
    </span>
    {taskIcons.map((icon, i) => (
      <span
        key={i}
        className={`flex h-[50px] w-[53px] items-center justify-center ${i === 10 ? 'border-b-[3px] border-[#ffdcb0] bg-[#333]' : ''}`}
      >
        {icon}
      </span>
    ))}
    <span className="flex w-[43px] items-center justify-center"><ChevronUp className="h-[20px] w-[22px] text-white" strokeWidth={1.2} /></span>
    <span className="flex w-[41px] items-center justify-center">
      <svg viewBox="0 0 20 20" className="h-[20px] w-[20px]" fill="none" stroke="#bbb" strokeWidth="1.4" strokeLinecap="round">
        <path d="M17 2 C8 3 3 9 2 18 M17 7 C11 8 7 12 6 18 M17 12 C14 12.5 11.5 15 11 18" />
        <circle cx="16.5" cy="17" r="1.2" fill="#fff" stroke="none" />
      </svg>
    </span>
    <span className="flex w-[36px] items-center justify-center">
      <Volume className="h-[20px] w-[18px] text-[#ccc]" strokeWidth={1.2} />
      <X className="-ml-[3px] h-[11px] w-[11px] text-[#ccc]" strokeWidth={1.5} />
    </span>
    <span className="flex w-[56px] items-center justify-center">
      <svg viewBox="0 0 22 26" className="h-[26px] w-[22px]" fill="none" stroke="#fff" strokeWidth="1.3">
        <path d="M2 24 C5 22 4 18 7 14 L14 3 C16 1 19 3 18 6 L11 17 C9 20 6 20 7 15" />
        <path d="M15 12 L20 15" />
      </svg>
    </span>
    <span className="flex w-[44px] items-center justify-center">
      <svg viewBox="0 0 30 22" className="h-[22px] w-[30px]" fill="none" stroke="#fff" strokeWidth="1.2">
        <rect x=".6" y=".6" width="28.8" height="20.8" />
        <path d="M4 10 H26 M4 13.5 H26 M9 17 H21" strokeDasharray="1.5 1.5" strokeWidth="1.5" />
      </svg>
    </span>
    <span className="flex w-[50px] items-center justify-center text-[15px]">ENG</span>
    <span className="flex w-[78px] flex-col items-center justify-center text-[14px] leading-[24px]">
      <span>3:14 PM</span>
      <span>11/9/2017</span>
    </span>
    <span className="flex flex-1 items-center justify-center pr-[6px]">
      <span className="relative">
        <svg viewBox="0 0 20 22" className="h-[22px] w-[20px]">
          <path d="M0 0 H20 V16 H7 L3 20 V16 H0 Z" fill="#fff" />
          <path d="M4 5 H16 M4 9 H16 M4 13 H16" stroke="#000" />
        </svg>
        <span className="absolute -bottom-[8px] -right-[9px] flex h-[20px] w-[20px] items-center justify-center rounded-full bg-[#333] text-[13px] font-bold leading-none text-white">3</span>
      </span>
    </span>
  </div>
);

export default function App() {
  return (
    <div className="flex h-[1080px] w-[1920px] flex-col overflow-hidden bg-black font-['Noto_Sans',sans-serif]">
      <BrowserChrome />
      <div className="flex min-h-0 flex-1">
        <div className="flex w-[1516px] shrink-0 bg-black">
          <div className="w-[1219px] shrink-0 pl-[75px] pt-[9px]">
            <div className="h-[895px] w-[910px] rounded-[50%] border border-[#6a6a6a]/60 bg-[linear-gradient(180deg,#ae9516_0%,#8a5f08_16%,#6a3400_28%,#500000_41.5%,#440005_48%,#3a001c_56%,#320a30_70%,#341850_83.5%,#3a2f5e_87%,#405070_94%,#47637f_100%)]" />
          </div>
          <Controls />
        </div>
        <PageScrollbar />
        <DevTools />
      </div>
      <Taskbar />
    </div>
  );
}
